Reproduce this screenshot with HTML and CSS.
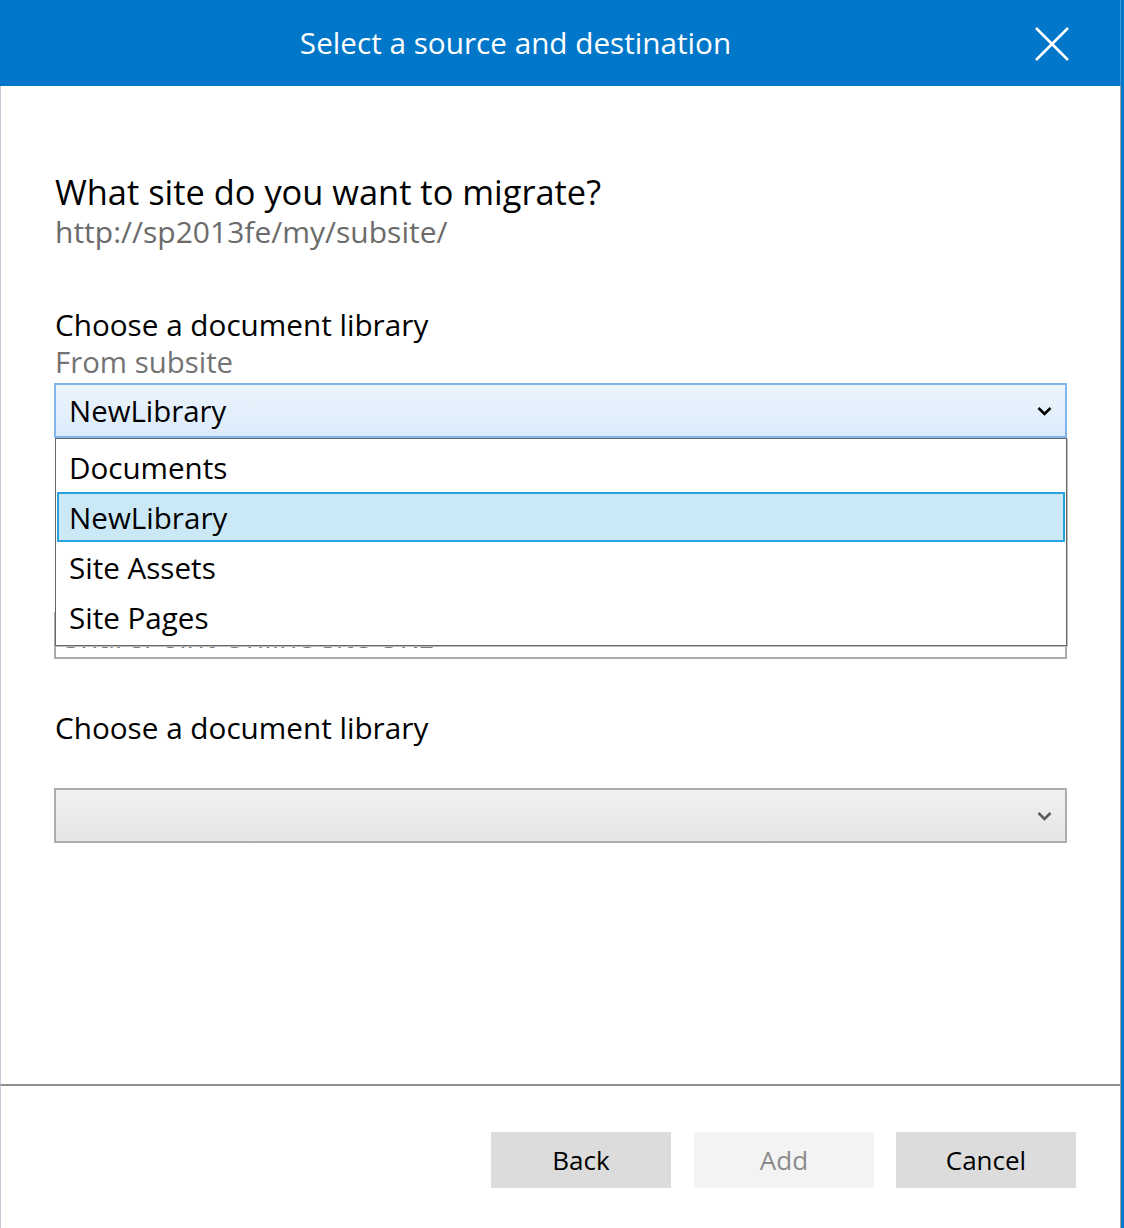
FILE: index.html
```html
<!DOCTYPE html>
<html lang="en">
<head>
<meta charset="utf-8">
<title>Select a source and destination</title>
<link rel="stylesheet" href="styles.css">
</head>
<body>
<div class="screen">
  <div class="dialog">
    <header class="titlebar">
      <h1 class="title">Select a source and destination</h1>
      <button class="close" aria-label="Close">
        <svg width="34" height="34" viewBox="0 0 34 34"><path d="M1 1 L33 33 M33 1 L1 33" stroke="#fff" stroke-width="2.6" fill="none"/></svg>
      </button>
    </header>
    <main class="content">
      <section class="source">
        <h2 class="question">What site do you want to migrate?</h2>
        <p class="site-url">http://sp2013fe/my/subsite/</p>
        <p class="label">Choose a document library</p>
        <p class="sublabel">From subsite</p>
        <div class="combo-wrap">
          <div class="combo combo-open">
            <span class="combo-value">NewLibrary</span>
            <svg class="chev" width="15" height="10" viewBox="0 0 15 10"><path d="M1.5 2 L7.5 8 L13.5 2" stroke="#000" stroke-width="2.6" fill="none"/></svg>
          </div>
          <ul class="listbox">
            <li class="option">Documents</li>
            <li class="option selected">NewLibrary</li>
            <li class="option">Site Assets</li>
            <li class="option">Site Pages</li>
          </ul>
        </div>
      </section>
      <section class="dest">
        <div class="textbox"><span class="placeholder">SharePoint Online site URL</span></div>
        <p class="label label-dest">Choose a document library</p>
        <div class="combo combo-disabled">
          <span class="combo-value"></span>
          <svg class="chev" width="15" height="10" viewBox="0 0 15 10"><path d="M1.5 2 L7.5 8 L13.5 2" stroke="#5a5a5a" stroke-width="2.6" fill="none"/></svg>
        </div>
      </section>
    </main>
    <footer class="actions">
      <button class="btn">Back</button>
      <button class="btn btn-disabled" disabled>Add</button>
      <button class="btn">Cancel</button>
    </footer>
  </div>
  <div class="edge"></div>
</div>
</body>
</html>
```

FILE: styles.css
```css
* { box-sizing: border-box; }
html, body { margin: 0; padding: 0; }
body {
  background: #fff;
  font-family: "Open Sans", "Noto Sans", sans-serif;
  color: #000;
}
.screen {
  display: flex;
  width: 1124px;
  height: 1228px;
  overflow: hidden;
}
.dialog {
  width: 1121px;
  height: 1228px;
  display: flex;
  flex-direction: column;
  background: #fff;
}
.edge {
  width: 3px;
  height: 1228px;
  background: #0177c9;
}
.titlebar {
  height: 86px;
  flex: none;
  background: #0177c9;
  display: flex;
  align-items: center;
  border-right: 1px solid #3d93d3;
}
.title {
  flex: 1;
  margin: 0;
  text-align: center;
  font-weight: 400;
  font-size: 29.7px;
  line-height: 86px;
  color: #fff;
}
.close {
  width: 89px;
  height: 86px;
  padding: 0 0 0 4px;
  border: 0;
  background: transparent;
  display: flex;
  align-items: center;
  justify-content: flex-start;
}
.close svg { display: block; margin-top: 1px; }
.content {
  flex: 1;
  border-left: 1px solid #c3ccd8;
  border-right: 1px solid #a3a3a3;
  padding: 86px 53px 0 53px;
}
.question {
  margin: 0;
  font-weight: 400;
  font-size: 34.4px;
  line-height: 40px;
  padding-left: 1px;
}
.site-url {
  margin: 1px 0 0;
  font-size: 30px;
  line-height: 38px;
  color: #6b6b6b;
  padding-left: 1px;
}
.label {
  margin: 55px 0 0;
  font-size: 29.7px;
  line-height: 37px;
  padding-left: 1px;
}
.sublabel {
  margin: 0;
  font-size: 29.4px;
  line-height: 39px;
  color: #737373;
  padding-left: 1px;
}
.combo-wrap {
  position: relative;
  margin-top: 1px;
}
.combo {
  height: 55px;
  width: 1013px;
  border: 2px solid #80b6ea;
  display: flex;
  align-items: center;
  justify-content: space-between;
  padding: 0 13px 0 13px;
}
.combo-open {
  background: linear-gradient(#edf5fd, #dbeafb);
}
.combo-value {
  font-size: 29.4px;
  line-height: 1;
  padding-top: 2px;
}
.chev { display: block; }
.listbox {
  position: absolute;
  top: 100%;
  left: 1px;
  width: 1012px;
  height: 208px;
  margin: 0;
  padding: 3px 1px;
  list-style: none;
  background: #fff;
  border: 1px solid #676767;
  box-shadow: 1px 1px 0 #bdbdbd;
  z-index: 2;
}
.option {
  height: 50px;
  border: 2px solid transparent;
  padding-left: 10px;
  font-size: 29.6px;
  line-height: 47px;
}
.option.selected {
  background: #cbe8f6;
  border-color: #28a2dc;
}
.dest {
  padding-top: 174px;
}
.textbox {
  width: 1013px;
  height: 47px;
  border: 2px solid #ababab;
  display: flex;
  align-items: center;
  padding-left: 8px;
}
.placeholder {
  font-size: 29.6px;
  color: #7a7a7a;
  line-height: 1;
  padding-top: 3px;
}
.label-dest {
  margin-top: 50px;
}
.combo-disabled {
  margin-top: 42px;
  border-color: #adadad;
  background: linear-gradient(#f1f1f1, #e4e4e4);
}
.actions {
  flex: none;
  height: 144px;
  border-top: 2px solid #8f8f8f;
  border-left: 1px solid #c3ccd8;
  border-right: 1px solid #a3a3a3;
  display: flex;
  justify-content: flex-end;
  align-items: flex-start;
  gap: 22px;
  padding: 46px 44px 0 0;
}
.btn {
  width: 180px;
  height: 56px;
  border: 0;
  background: #dcdcdc;
  font-family: "Open Sans", "Noto Sans", sans-serif;
  font-size: 26px;
  color: #000;
  padding: 0;
}
.btn:first-child { margin-right: 1px; }
.btn-disabled {
  background: #f3f3f3;
  color: #8a8a8a;
}
```
